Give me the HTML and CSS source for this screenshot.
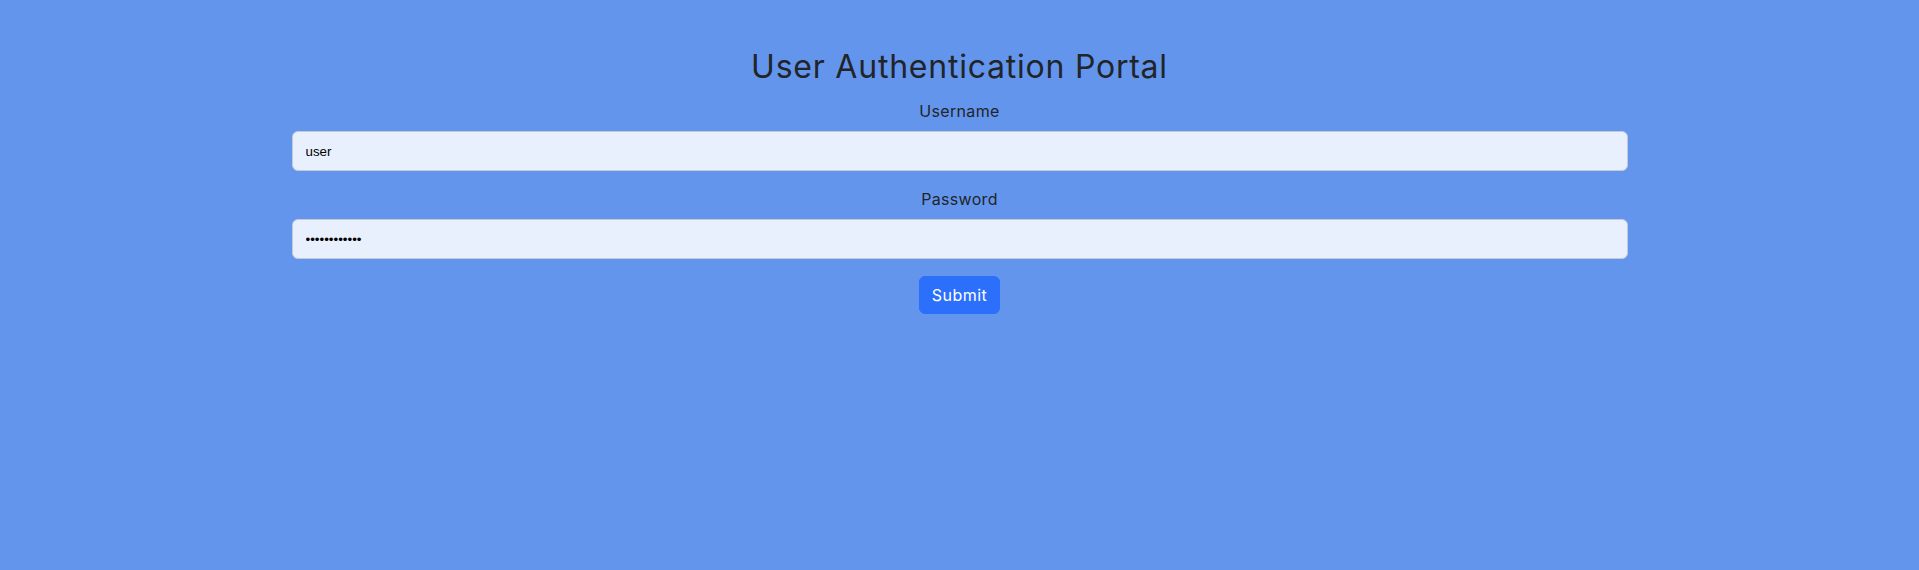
FILE: index.html
```html
<!DOCTYPE html>
<html lang="en">
<head>
<meta charset="utf-8">
<title>User Authentication Portal</title>
<link rel="stylesheet" href="styles.css">
</head>
<body>
<main class="page">
  <h2 class="title">User Authentication Portal</h2>
  <form class="form">
    <div class="group">
      <label class="label" for="username">Username</label>
      <input class="field" id="username" type="text" value="user">
    </div>
    <div class="group group-last">
      <label class="label" for="password">Password</label>
      <input class="field" id="password" type="password" value="password1234">
    </div>
    <div class="actions">
      <button class="btn" type="button">Submit</button>
    </div>
  </form>
</main>
</body>
</html>
```

FILE: styles.css
```css
* { box-sizing: border-box; }
html, body {
  margin: 0;
  padding: 0;
  background: #6495ed;
  height: 100%;
}
body {
  font-family: Inter, "Noto Sans", sans-serif;
  color: #212529;
  font-size: 16px;
  line-height: 1.5;
  letter-spacing: 0.02em;
}
.page {
  width: 1336px;
  margin: 0 auto;
  padding-top: 48px;
}
.title {
  margin: 0 0 13px;
  font-size: 32px;
  font-weight: 400;
  line-height: 1.2;
  letter-spacing: 0.024em;
  text-align: center;
}
.form {
  display: flex;
  flex-direction: column;
}
.group {
  display: flex;
  flex-direction: column;
  margin-bottom: 16px;
}
.group-last {
  margin-bottom: 17px;
}
.label {
  display: block;
  text-align: center;
  margin-bottom: 8px;
  line-height: 24px;
}
.field {
  display: block;
  width: 100%;
  height: 40px;
  padding: 6px 13px;
  font-family: "Liberation Sans", Arial, sans-serif;
  font-size: 13.33px;
  letter-spacing: 0;
  color: #000;
  background: #e8f0fe;
  border: 1px solid #c3cad6;
  border-radius: 6px;
  outline: none;
}
.actions {
  display: flex;
  justify-content: center;
}
.btn {
  font-family: Inter, "Noto Sans", sans-serif;
  font-size: 16px;
  line-height: 24px;
  letter-spacing: 0.03em;
  height: 38px;
  padding: 6px 12px;
  color: #fff;
  background: #2c6ffb;
  border: 1px solid #2c6ffb;
  border-radius: 6px;
  cursor: pointer;
}
```
